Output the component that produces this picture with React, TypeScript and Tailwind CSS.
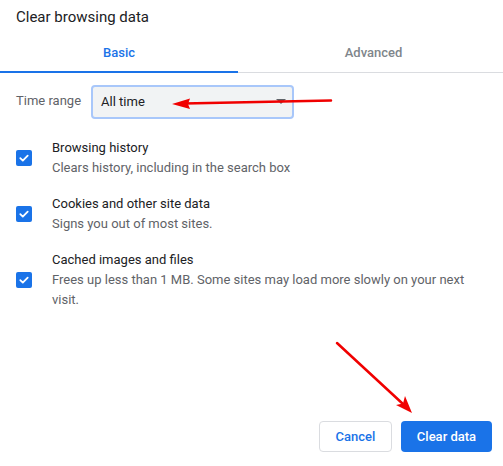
import React from 'react';

const items = [
  { title: 'Browsing history', desc: 'Clears history, including in the search box' },
  { title: 'Cookies and other site data', desc: 'Signs you out of most sites.' },
  {
    title: 'Cached images and files',
    desc: 'Frees up less than 1 MB. Some sites may load more slowly on your next visit.',
  },
];

const Check: React.FC = () => (
  <div className="w-4 h-4 shrink-0 rounded-[2px] bg-[#1a73e8] flex items-center justify-center">
    <svg width="12" height="12" viewBox="0 0 12 12" fill="none">
      <path d="M2.3 6.2 L4.8 8.6 L9.7 3.6" stroke="white" strokeWidth="1.8" strokeLinecap="round" strokeLinejoin="round" />
    </svg>
  </div>
);

export default function App() {
  return (
    <div
      className="relative w-[503px] h-[466px] bg-white overflow-hidden flex flex-col"
      style={{ fontFamily: 'Roboto, "Liberation Sans", sans-serif' }}
    >
      {/* Title */}
      <div className="pt-[7px] px-4 h-[34px] text-[15px] leading-5 text-[#202124]">Clear browsing data</div>

      {/* Tabs */}
      <div className="flex h-[39px] border-b border-[#dadce0]">
        <div className="w-[238px] flex items-center justify-center border-b-2 border-[#1a73e8] -mb-px text-[13px] font-medium text-[#1a73e8]">
          Basic
        </div>
        <div className="flex-1 flex items-center justify-center pl-[6px] text-[13px] font-medium text-[#80868b]">
          Advanced
        </div>
      </div>

      {/* Time range */}
      <div className="flex items-center gap-[10px] px-4 mt-3">
        <span className="text-[13px] text-[#5f6368] -mt-[2px]">Time range</span>
        <div className="relative w-[203px] h-[34px] rounded-[4px] border-2 border-[#a8c7fa] bg-[#f1f3f4] flex items-center pl-[8px] text-[13px] text-[#202124]">
          All time
          <div className="absolute right-[6px] top-[12px] w-0 h-0 border-l-[5px] border-r-[5px] border-t-[5px] border-l-transparent border-r-transparent border-t-[#5f6368]" />
        </div>
      </div>

      {/* Checkbox items */}
      <div className="flex flex-col gap-4 px-4 mt-[19px]">
        {items.map((it) => (
          <div key={it.title} className="flex items-center gap-5">
            <Check />
            <div className="flex-1 text-[13px] leading-5">
              <div className="text-[#202124]">{it.title}</div>
              <div className="text-[#5f6368]">{it.desc}</div>
            </div>
          </div>
        ))}
      </div>

      {/* Buttons */}
      <div className="mt-auto flex justify-end gap-[9px] pr-[11px] pb-[14px]">
        <button className="w-[73px] h-[31px] rounded-[4px] border border-[#dadce0] bg-white text-[13px] font-medium text-[#1a73e8]">
          Cancel
        </button>
        <button className="w-[91px] h-[31px] rounded-[4px] bg-[#1a73e8] text-[13px] font-medium text-white">
          Clear data
        </button>
      </div>

      {/* Red annotation arrows */}
      <svg className="absolute inset-0 pointer-events-none" width="503" height="466" viewBox="0 0 503 466">
        <line x1="331" y1="100.5" x2="184" y2="103.5" stroke="#f00000" strokeWidth="2.5" strokeLinecap="round" />
        <polygon points="172,104 190,98.5 188,104 190,109" fill="#f00000" />
        <line x1="337" y1="343" x2="403" y2="404" stroke="#f00000" strokeWidth="2.5" strokeLinecap="round" />
        <polygon points="412,413 396,405 403,403.5 405,396" fill="#f00000" />
      </svg>
    </div>
  );
}
